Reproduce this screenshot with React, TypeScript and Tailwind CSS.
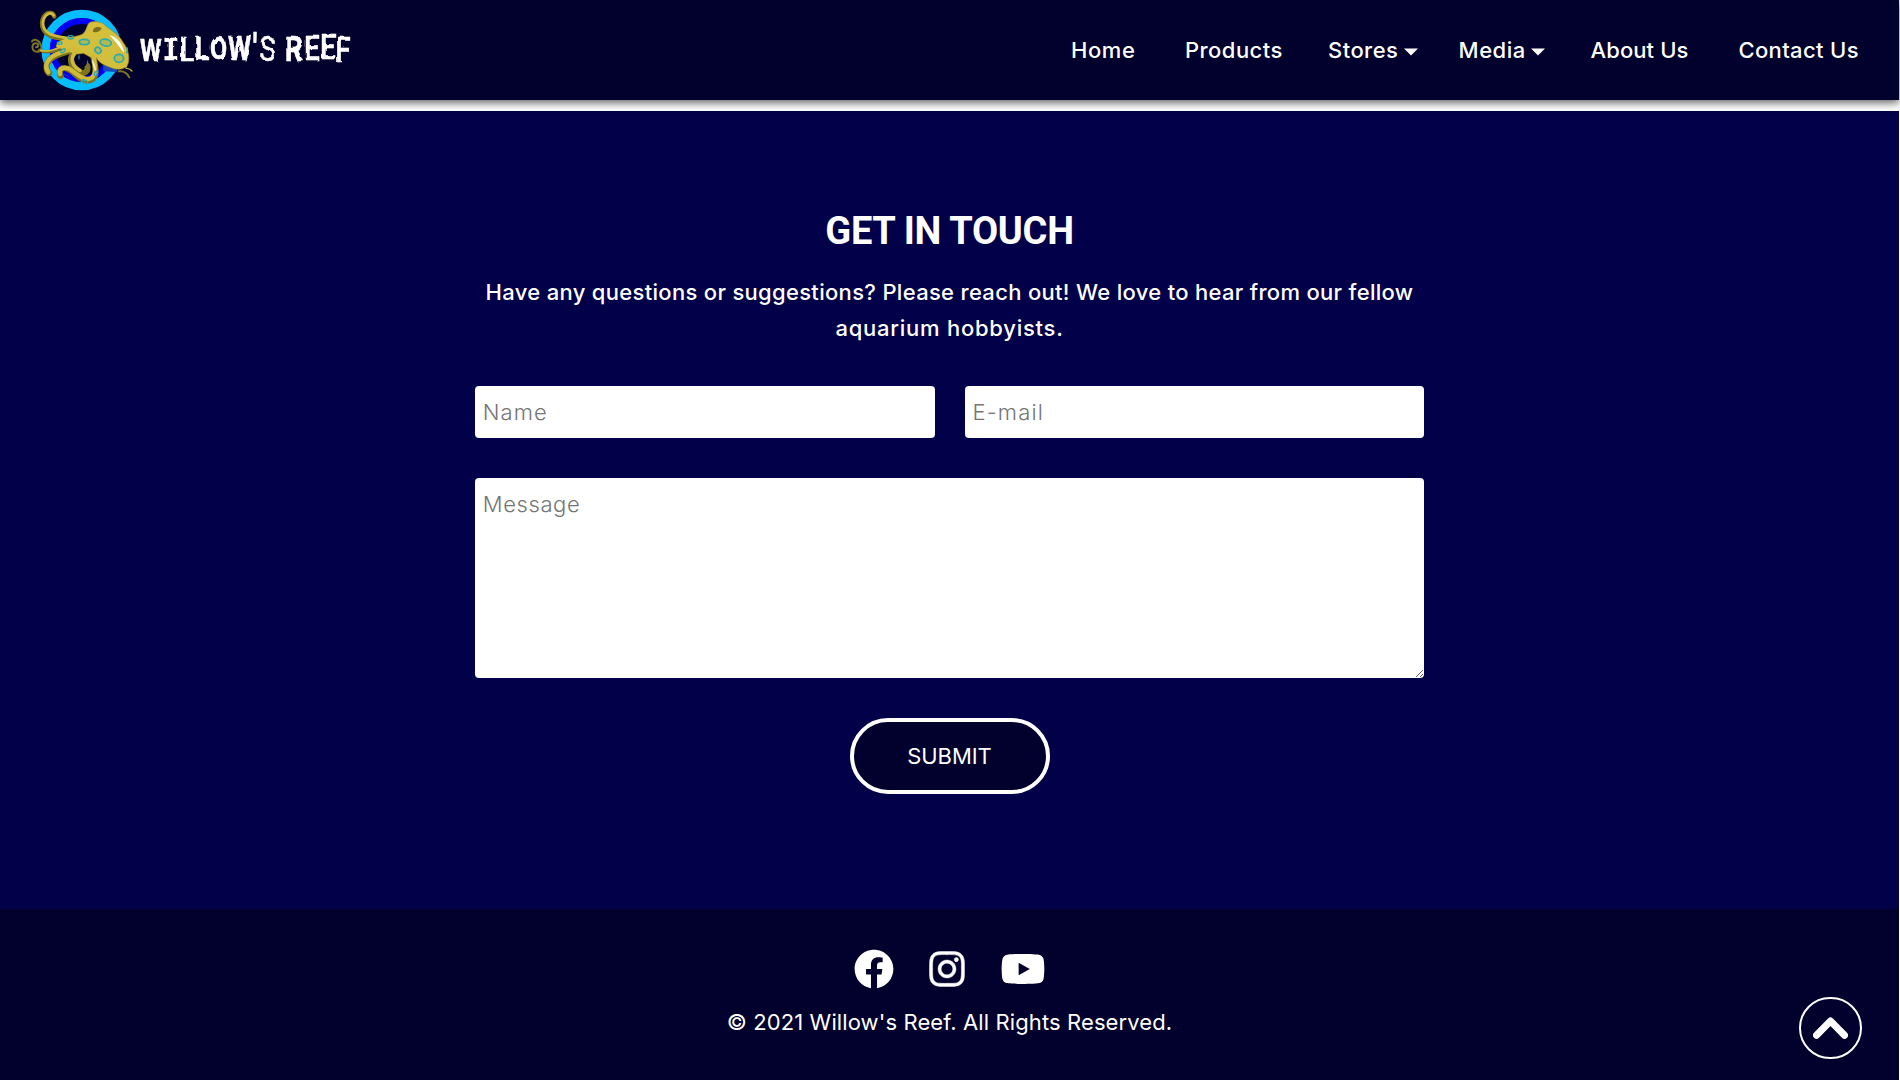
import { FaFacebook, FaInstagram, FaYoutube } from "react-icons/fa";

function OctopusLogo() {
  return (
    <svg className="block h-[100px] w-[115px] shrink-0" viewBox="0 0 345 300" fill="none" aria-hidden="true">
      <circle cx="185" cy="150" r="108" stroke="#08bdfb" strokeWidth="25" />
      <circle cx="185" cy="150" r="87" stroke="#0000f5" strokeWidth="18" />
      {/* shaded outlines under the arms */}
      <g stroke="#7d7420" strokeLinecap="round" strokeLinejoin="round">
        <path d="M103 50C100 34 78 34 69 55C60 80 72 102 96 110C112 115 135 118 160 120" strokeWidth="13" />
        <path d="M48 142C58 140 56 128 46 130C32 134 36 156 52 155C66 154 68 140 58 126C50 117 40 118 36 124" strokeWidth="6" />
        <path d="M58 150C76 160 96 158 120 146" strokeWidth="9" />
        <path d="M160 150C116 162 84 170 80 198C79 208 82 214 87 219" strokeWidth="19" />
        <path d="M172 152C142 168 150 202 176 216C190 224 206 216 202 198" strokeWidth="18" />
        <path d="M122 228C116 210 124 200 142 206C166 216 176 242 204 242C230 240 232 216 220 172" strokeWidth="18" />
        <path d="M296 214C310 212 322 220 328 232" strokeWidth="6" />
      </g>
      <path d="M250 188L296 190L290 216L250 214Z" fill="#1749bd" />
      <path
        d="M108 140C112 112 158 114 184 104C202 96 198 74 210 67C224 62 240 66 250 71C266 88 294 98 310 128C328 150 330 182 322 196C308 214 284 208 270 202C252 196 236 188 228 172C218 180 204 166 190 160C166 166 144 156 108 140Z"
        fill="#d4bf3c"
        stroke="#92852b"
        strokeWidth="2"
      />
      <g stroke="#d0ba3a" strokeLinecap="round" strokeLinejoin="round">
        <path d="M101 46C96 36 80 38 71 57C64 80 76 98 98 105C116 110 140 114 162 118" strokeWidth="8" />
        <path d="M62 151C78 156 98 152 122 140" strokeWidth="5" />
        <path d="M160 146C116 158 86 168 79 194C78 204 80 210 85 216" strokeWidth="13" />
        <path d="M176 150C146 166 154 198 180 211" strokeWidth="11" />
        <path d="M120 222C116 208 126 200 144 205C166 214 178 237 204 237C226 235 230 212 220 166" strokeWidth="13" />
        <path d="M318 192C326 198 310 204 322 206C330 206 332 210 336 213" strokeWidth="4" />
      </g>
      <path d="M268 106C290 110 310 132 312 158C300 146 290 126 268 106Z" fill="#ffffff" />
      <path d="M216 178C224 190 229 202 228 218C222 204 216 192 216 178Z" fill="#f7f3d5" />
      <path d="M219 96C218 82 232 78 245 84C242 94 232 98 219 96Z" fill="#796d21" />
      <path d="M190 164C176 174 176 190 194 200C204 192 202 174 190 164Z" fill="#05002c" />
      <g fill="#b6b94c" stroke="#26acb7" strokeWidth="5">
        <ellipse cx="193" cy="126" rx="15" ry="8" />
        <ellipse cx="257" cy="128" rx="17" ry="10" transform="rotate(12 257 128)" />
        <ellipse cx="234" cy="151" rx="8" ry="10" transform="rotate(-45 234 151)" />
        <ellipse cx="297" cy="175" rx="14" ry="12" />
      </g>
      <g stroke="#26acb7" strokeWidth="4">
        <ellipse cx="152" cy="112" rx="8" ry="5" />
        <ellipse cx="119" cy="129" rx="7" ry="4" />
        <ellipse cx="129" cy="152" rx="8" ry="4" transform="rotate(-40 129 152)" />
        <path d="M177 166V178M203 182V190" strokeWidth="3" />
        <ellipse cx="228" cy="220" rx="4" ry="7" transform="rotate(25 228 220)" />
        <ellipse cx="194" cy="245" rx="9" ry="5" transform="rotate(20 194 245)" />
        <path d="M320 142Q325 150 320 160" />
      </g>
      <path d="M128 224Q138 222 148 232" stroke="#183bb5" strokeWidth="3" />
    </svg>
  );
}

function Wordmark() {
  return (
    <svg className="block h-[100px] w-[226px] shrink-0" viewBox="0 0 226 100" role="img" aria-label="Willow's Reef">
      <defs>
        <filter id="brush" x="-5%" y="-10%" width="110%" height="120%">
          <feTurbulence type="fractalNoise" baseFrequency="0.1" numOctaves="1" seed="4" result="noise" />
          <feDisplacementMap in="SourceGraphic" in2="noise" scale="4" xChannelSelector="R" yChannelSelector="G" />
        </filter>
      </defs>
      <text
        filter="url(#brush)"
        transform="translate(5 61) scale(0.8 1)"
        fill="#fff"
        stroke="#fff"
        strokeWidth="0.5"
        strokeLinejoin="round"
        fontFamily="Roboto, sans-serif"
        fontWeight="700"
      >
        <tspan x="0" y="0" fontSize="31">W</tspan>
        <tspan x="28.5" y="-1" fontFamily="Liberation Mono, monospace" fontSize="34">I</tspan>
        <tspan x="49.5 68.5" y="0 -1" fontSize="34">LL</tspan>
        <tspan x="87.5" y="-2" fontSize="31">O</tspan>
        <tspan x="110" y="-1" fontSize="33">W</tspan>
        <tspan x="141" y="-2" fontSize="35">'</tspan>
        <tspan x="149" y="0" fontSize="35" fontWeight="400">S </tspan>
        <tspan x="181" y="0" fontSize="36">R</tspan>
        <tspan x="205 225 244" y="-1 -2 1" fontSize="35" fontWeight="500">EEF</tspan>
      </text>
    </svg>
  );
}

function Caret() {
  return (
    <svg className="absolute top-[-2px] left-full h-2 w-[14px]" viewBox="0 0 14 8" fill="#fff" aria-hidden="true">
      <path d="M0 0.5H14L7 7.5Z" />
    </svg>
  );
}

const links = [
  { label: "Home", box: "w-[114px]", track: "tracking-[0.6px]" },
  { label: "Products", box: "w-[143px]", track: "tracking-[0.45px]" },
  { label: "Stores", box: "w-[130.5px]", track: "tracking-[0.45px]", caret: true },
  { label: "Media", box: "w-[132px]", track: "tracking-[0.55px]", caret: true },
  { label: "About Us", box: "w-[148px]", track: "tracking-[0.1px]" },
  { label: "Contact Us", box: "w-[160.5px]", track: "tracking-[0.34px]" },
];

export default function App() {
  return (
    <div className="h-[1080px] overflow-hidden bg-white font-['Inter',sans-serif] text-[22px] text-white">
      <div className="flex h-full w-[1899px] flex-col">
        <header className="relative z-10 flex h-[100px] shrink-0 items-center bg-[#02002c] pl-5 shadow-[0_3px_8px_rgba(0,0,0,0.6)]">
          <OctopusLogo />
          <Wordmark />
          <nav className="ml-auto flex leading-9 font-medium">
            {links.map((l) => (
              <a key={l.label} href="#" className={`flex items-center whitespace-nowrap ${l.box}`}>
                <span className={l.track}>{l.label}</span>
                {l.caret && (
                  <span className="relative ml-[-8.5px] w-[14px]">
                    <Caret />
                  </span>
                )}
              </a>
            ))}
          </nav>
        </header>

        <main className="mt-[11px] flex h-[798px] shrink-0 flex-col items-center bg-[#020048] pt-[98px]">
          <h2 className="font-['Roboto',sans-serif] text-[38px] leading-[44px] font-bold tracking-[-0.3px]">GET IN TOUCH</h2>
          <p className="mt-[21px] text-center leading-9 font-medium whitespace-nowrap">
            <span className="block tracking-[0.31px]">
              Have any questions or suggestions? Please reach out! We love to hear from our fellow
            </span>
            <span className="block tracking-[0.75px]">aquarium hobbyists.</span>
          </p>
          <form className="mt-10 flex w-1/2 flex-col items-center gap-10">
            <div className="grid w-full grid-cols-2 gap-[30px]">
              <input
                placeholder="Name"
                className="h-[52px] min-w-0 rounded bg-white px-2 font-light tracking-[1.1px] text-black placeholder:text-[#757575]"
              />
              <input
                placeholder="E-mail"
                className="h-[52px] min-w-0 rounded bg-white px-2 font-light tracking-[1.14px] text-black placeholder:text-[#757575]"
              />
            </div>
            <textarea
              placeholder="Message"
              className="block h-[200px] w-full rounded bg-white p-2 leading-9 font-light tracking-[0.6px] text-black placeholder:text-[#757575]"
            />
            <button
              type="button"
              className="h-[76px] w-[200px] rounded-[38px] border-4 border-white bg-[#02002c] tracking-[-0.05px]"
            >
              SUBMIT
            </button>
          </form>
        </main>

        <footer className="flex grow flex-col items-center bg-[#02002c] pt-10">
          <div className="flex h-10 items-center gap-[35px]">
            <FaFacebook className="h-10 w-10" />
            <FaInstagram className="h-10 w-[36px] overflow-visible" strokeWidth={6} />
            <FaYoutube className="h-10 w-[46px]" />
          </div>
          <p className="mt-[15px] leading-9 tracking-[0.11px]">© 2021 Willow's Reef. All Rights Reserved.</p>
        </footer>
      </div>

      <a
        href="#"
        aria-label="Back to top"
        className="fixed right-[38px] bottom-[21px] z-20 flex h-[62px] w-[63px] items-center justify-center rounded-full border-2 border-white bg-[#02002c]"
      >
        <svg className="h-[22px] w-[35px]" viewBox="0 0 35 22" fill="none" stroke="#fff" strokeWidth="7" strokeLinecap="round" strokeLinejoin="round">
          <path d="M3.5 18.2L17.5 4L31.5 18.2" />
        </svg>
      </a>
    </div>
  );
}
